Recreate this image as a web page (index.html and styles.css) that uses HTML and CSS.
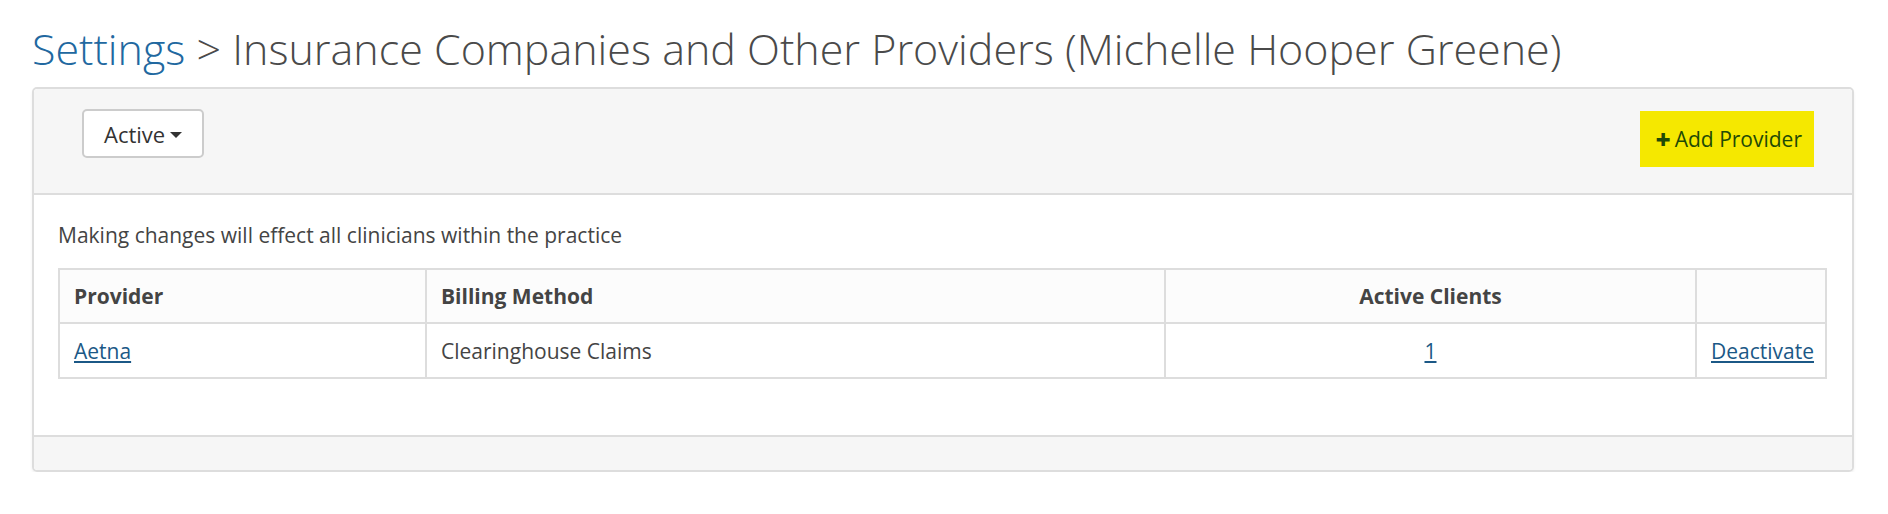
FILE: index.html
```html
<!DOCTYPE html>
<html lang="en">
<head>
    <meta charset="UTF-8">
    <title>Insurance Companies and Other Providers</title>
    <link rel="stylesheet" href="styles.css">
</head>
<body>

    <div class="page">
        <h1 class="page-title"><a href="#">Settings</a> &gt; Insurance Companies and Other Providers (Michelle Hooper Greene)</h1>

        <div class="panel">
            <!-- Toolbar -->
            <div class="panel-heading">
                <button class="btn-filter">Active <span class="caret"></span></button>
                <button class="btn-add"><span class="plus">+</span>Add Provider</button>
            </div>

            <div class="panel-body">
                <p class="note">Making changes will effect all clinicians within the practice</p>

                <table class="providers">
                    <thead>
                        <tr>
                            <th class="col-provider">Provider</th>
                            <th class="col-billing">Billing Method</th>
                            <th class="col-clients">Active Clients</th>
                            <th class="col-action"></th>
                        </tr>
                    </thead>
                    <tbody>
                        <tr>
                            <td><a href="#">Aetna</a></td>
                            <td>Clearinghouse Claims</td>
                            <td class="center"><a href="#">1</a></td>
                            <td><a href="#">Deactivate</a></td>
                        </tr>
                    </tbody>
                </table>
            </div>

            <div class="panel-footer"></div>
        </div>
    </div>

</body>
</html>
```

FILE: styles.css
```css
/* General */
body {
    font-family: 'Open Sans', 'Liberation Sans', sans-serif;
    background-color: #ffffff;
    color: #444;
    margin: 0;
    padding: 0;
}

a {
    color: #1b5886;
}

.page {
    padding: 22px 34px 0 32px;
}

/* Title */
.page-title {
    font-size: 43px;
    font-weight: 300;
    color: #4a4a4a;
    margin: 0 0 11px 0;
    line-height: 54px;
}

.page-title a {
    color: #2168a0;
    text-decoration: none;
}

/* Panel */
.panel {
    border: 2px solid #dddddd;
    border-radius: 5px;
    box-shadow: 0 2px 3px rgba(0, 0, 0, 0.06);
}

.panel-heading {
    background-color: #f6f6f6;
    border-bottom: 2px solid #dddddd;
    border-radius: 4px 4px 0 0;
    display: flex;
    justify-content: space-between;
    align-items: flex-start;
    padding: 20px 38px 26px 48px;
}

.btn-filter {
    font-family: inherit;
    font-size: 22px;
    color: #333;
    background-color: #ffffff;
    border: 2px solid #cccccc;
    border-radius: 5px;
    height: 49px;
    padding: 0 20px 0 20px;
    display: flex;
    align-items: center;
    gap: 5px;
}

.caret {
    width: 0;
    height: 0;
    border-top: 6px solid #333;
    border-left: 6px solid transparent;
    border-right: 6px solid transparent;
    margin-top: 2px;
}

.btn-add {
    font-family: inherit;
    font-size: 21px;
    color: #1f4a06;
    background-color: #f5e800;
    border: none;
    height: 56px;
    margin-top: 2px;
    padding: 0 12px 0 15px;
    display: flex;
    align-items: center;
}

.plus {
    font-weight: 800;
    font-size: 26px;
    margin-right: 4px;
    line-height: 1;
}

.panel-body {
    background-color: #ffffff;
    padding: 25px 27px 56px 24px;
}

.note {
    font-size: 21px;
    margin: 0 0 18px 0;
    line-height: 30px;
}

/* Table */
.providers {
    width: 100%;
    table-layout: fixed;
    border-collapse: collapse;
    border: 2px solid #dddddd;
    font-size: 21px;
}

.providers th,
.providers td {
    box-sizing: border-box;
    border: 2px solid #dddddd;
    padding: 0 14px;
    text-align: left;
}

.providers th {
    background-color: #fcfcfc;
    font-weight: 700;
    height: 54px;
}

.providers td {
    height: 55px;
}

.providers .col-provider { width: 367px; }
.providers .col-billing { width: 739px; }
.providers .col-clients { width: 531px; text-align: center; }
.providers .col-action { width: 130px; }

.providers .center {
    text-align: center;
}

.panel-footer {
    background-color: #f6f6f6;
    border-top: 2px solid #dddddd;
    border-radius: 0 0 4px 4px;
    height: 33px;
}
```
